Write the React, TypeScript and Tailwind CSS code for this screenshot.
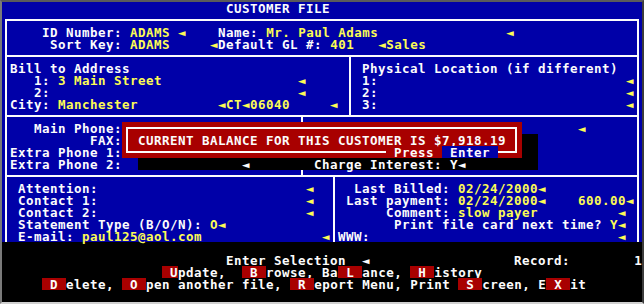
import type { ReactNode } from "react";

type Seg = [number, string, string?];

const W = "text-[#fcfcfc]";
const Y = "text-[#fcfc54]";
const HL = "inline-block h-[12px] align-top text-[#fcfcfc] bg-[#a80000]";

// one text-mode row; cols are absolute screen columns, `from` is where the row starts
function Line({ segs, from = 0 }: { segs: Seg[]; from?: number }) {
  let cur = from;
  const out: ReactNode[] = [];
  segs.forEach(([col, text, cls], i) => {
    const pad = " ".repeat(Math.max(0, col - cur));
    if (pad) out.push(<span key={"p" + i}>{pad}</span>);
    out.push(
      <span key={i} className={cls ?? W}>
        {text}
      </span>
    );
    cur = col + text.length;
  });
  return <div className="h-[12px] leading-[14px] whitespace-pre">{out}</div>;
}

function Popup() {
  return (
    <>
      <div className="absolute left-[120px] top-[120px] w-[400px] h-[36px] bg-[#a80000] pl-[4px] pr-[5px] flex flex-col">
        <div className="mt-[5px] h-[7px] border-t-2 border-l-2 border-r-2 border-[#fcfcfc]" />
        <div className="h-[12px] leading-[14px] border-l-2 border-r-2 border-[#fcfcfc] pl-[10px] whitespace-pre">
          CURRENT BALANCE FOR THIS CUSTOMER IS $7,918.19
        </div>
        <div className="h-[12px] leading-[14px] flex whitespace-pre">
          <div className="w-[2px] h-[7px] bg-[#fcfcfc]" />
          <div className="w-[258px] h-[2px] mt-[5px] bg-[#fcfcfc]" />
          <span> Press </span>
          <span className="h-[12px] bg-[#0000a8]"> Enter </span>
          <div className="flex-1 h-[2px] mt-[5px] bg-[#fcfcfc]" />
          <div className="w-[2px] h-[7px] bg-[#fcfcfc]" />
        </div>
      </div>
      <div className="absolute left-[520px] top-[132px] w-[16px] h-[24px] bg-black" />
      <div className="absolute left-[136px] top-[156px] w-[400px] h-[12px] bg-black">
        <Line from={17} segs={[[30, "◄"], [39, "Charge Interest: Y◄"]]} />
      </div>
    </>
  );
}

export default function App() {
  return (
    <div className="w-[644px] h-[304px] border-2 border-t-[#5a5a5a] border-l-[#7a7a7a] border-r-[#3c3c3c] border-b-[#d0d0d0] bg-black">
      <div className="relative w-[640px] h-[300px] font-['DejaVu_Sans_Mono',monospace] text-[12.5px] tracking-[0.475px] font-bold text-[#fcfcfc]">
        <div className="h-[240px] bg-[#0000a8] flex flex-col">
          <Line segs={[[28, "CUSTOMER FILE"]]} />
          <div className="mx-[3px] mt-[5px] flex-1 flex flex-col border-2 border-b-0 border-[#fcfcfc]">
            <div className="px-[3px] py-[5px] border-b-2 border-[#fcfcfc]">
              <Line from={1} segs={[[5, "ID Number:"], [16, "ADAMS", Y], [22, "◄", Y], [27, "Name:"], [33, "Mr. Paul Adams", Y], [63, "◄", Y]]} />
              <Line from={1} segs={[[6, "Sort Key:"], [16, "ADAMS", Y], [26, "◄", Y], [27, "Default GL #:"], [41, "401", Y], [47, "◄Sales", Y]]} />
            </div>
            <div className="flex border-b-2 border-[#fcfcfc]">
              <div className="w-[344px] pl-[3px] py-[5px] border-r-2 border-[#fcfcfc]">
                <Line from={1} segs={[[1, "Bill to Address"]]} />
                <Line from={1} segs={[[4, "1:"], [7, "3 Main Street", Y], [37, "◄", Y]]} />
                <Line from={1} segs={[[4, "2:"], [37, "◄", Y]]} />
                <Line from={1} segs={[[1, "City:"], [7, "Manchester", Y], [27, "◄CT◄06040", Y], [41, "◄", Y]]} />
              </div>
              <div className="flex-1 pl-[3px] py-[5px]">
                <Line from={44} segs={[[45, "Physical Location (if different)"]]} />
                <Line from={44} segs={[[45, "1:"], [78, "◄", Y]]} />
                <Line from={44} segs={[[45, "2:"], [78, "◄", Y]]} />
                <Line from={44} segs={[[45, "3:"], [78, "◄", Y]]} />
              </div>
            </div>
            <div className="flex border-b-2 border-[#fcfcfc]">
              <div className="w-[296px] pl-[3px] py-[5px] border-r-2 border-[#fcfcfc]">
                <Line from={1} segs={[[4, "Main Phone:"]]} />
                <Line from={1} segs={[[11, "FAX:"]]} />
                <Line from={1} segs={[[1, "Extra Phone 1:"]]} />
                <Line from={1} segs={[[1, "Extra Phone 2:"]]} />
              </div>
              <div className="flex-1 pl-[3px] py-[5px]">
                <Line from={38} segs={[[72, "◄", Y]]} />
                <Line from={38} segs={[]} />
                <Line from={38} segs={[]} />
                <Line from={38} segs={[]} />
              </div>
            </div>
            <div className="flex flex-1">
              <div className="w-[328px] pl-[3px] pt-[5px] border-r-2 border-[#fcfcfc]">
                <Line from={1} segs={[[2, "Attention:"], [38, "◄", Y]]} />
                <Line from={1} segs={[[2, "Contact 1:"], [38, "◄", Y]]} />
                <Line from={1} segs={[[2, "Contact 2:"], [38, "◄", Y]]} />
                <Line from={1} segs={[[2, "Statement Type (B/O/N):"], [26, "O◄", Y]]} />
                <Line from={1} segs={[[2, "E-mail:"], [10, "paul125@aol.com", Y], [40, "◄", Y]]} />
              </div>
              <div className="flex-1 pl-[3px] pt-[5px]">
                <Line from={42} segs={[[44, "Last Billed:"], [57, "02/24/2000◄", Y]]} />
                <Line from={42} segs={[[43, "Last payment:"], [57, "02/24/2000◄", Y], [72, "600.00◄", Y]]} />
                <Line from={42} segs={[[48, "Comment:"], [57, "slow payer", Y], [77, "◄", Y]]} />
                <Line from={42} segs={[[49, "Print file card next time?"], [76, "Y◄", Y]]} />
                <Line from={42} segs={[[42, "WWW:"], [77, "◄", Y]]} />
              </div>
            </div>
          </div>
        </div>
        <div className="h-[60px] bg-black">
          <Line segs={[]} />
          <Line segs={[[28, "Enter Selection"], [45, "◄"], [64, "Record:"], [79, "1"]]} />
          <Line segs={[[20, " U", HL], [22, "pdate,"], [30, " B ", HL], [33, "rowse,"], [40, "Ba"], [42, " L ", HL], [45, "ance,"], [51, " H ", HL], [54, "istory"]]} />
          <Line segs={[[5, " D ", HL], [8, "elete,"], [15, " O ", HL], [18, "pen another file,"], [36, " R ", HL], [39, "eport Menu, Print"], [57, " S ", HL], [60, "creen, E"], [68, " X ", HL], [71, "it"]]} />
        </div>
        <Popup />
      </div>
    </div>
  );
}
